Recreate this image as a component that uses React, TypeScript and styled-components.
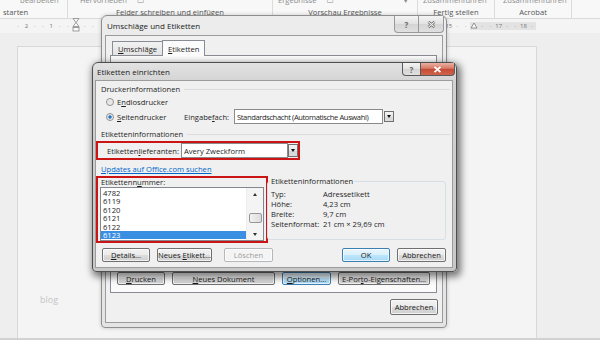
import React from "react";
import styled, { createGlobalStyle } from "styled-components";

const FONT = `"Open Sans", "Noto Sans", "DejaVu Sans", sans-serif`;

const GlobalStyle = createGlobalStyle`
  html, body { margin: 0; padding: 0; }
  body {
    width: 600px;
    height: 340px;
    overflow: hidden;
    background: #eeeeee;
    font-family: ${FONT};
    font-size: 7.6px;
    color: #1e1e1e;
  }
`;

const Screen = styled.div`
  position: relative;
  width: 600px;
  height: 340px;
  overflow: hidden;
  display: flex;
  flex-direction: column;
  background: #eeeeee;
`;

/* ---------- ribbon ---------- */

const Ribbon = styled.div`
  display: flex;
  height: 19px;
  flex: none;
  box-sizing: border-box;
  background: #f8f8f8;
  border-bottom: 1px solid #dadada;
`;

const RibbonGroup = styled.div<{ $w: number; $left?: boolean }>`
  width: ${(p) => p.$w}px;
  flex: none;
  box-sizing: border-box;
  border-right: 1px solid #dcdcdc;
  display: flex;
  flex-direction: column;
  text-align: ${(p) => (p.$left ? "left" : "center")};
`;

const CutRow = styled.div<{ $pad: number }>`
  height: 6px;
  overflow: hidden;
  display: flex;
  gap: 10px;
  padding-left: ${(p) => p.$pad}px;
  color: #8a8a8a;
  span { line-height: 12px; margin-top: -6px; white-space: nowrap; }
`;

const GroupLabel = styled.div<{ $pad?: number }>`
  height: 12px;
  line-height: 13px;
  color: #555;
  white-space: nowrap;
  padding-left: ${(p) => p.$pad ?? 0}px;
`;

/* ---------- ruler ---------- */

const Ruler = styled.div`
  display: flex;
  height: 14px;
  flex: none;
  align-items: center;
  background: #f4f4f4;
  color: #777;
  font-size: 6px;
`;

const Ticks = styled.div<{ $ml: number; $shade?: boolean; $w?: number }>`
  display: flex;
  align-items: center;
  margin-left: ${(p) => p.$ml}px;
  height: 8px;
  width: ${(p) => (p.$w ? `${p.$w}px` : "auto")};
  background: ${(p) => (p.$shade ? "#e3e3e3" : "transparent")};
`;

const Tick = styled.span`
  width: 8.3px;
  text-align: center;
  flex: none;
`;

/* ---------- document ---------- */

const Workspace = styled.div`
  flex: 1;
  display: flex;
  padding: 13px 0 0 17px;
  border-bottom: 2px solid #d2d2d2;
`;

const Page = styled.div`
  width: 520px;
  box-sizing: border-box;
  background: #f4f4f4;
  border: 1px solid #d8d8d8;
  border-bottom: none;
  padding: 246px 0 0 22px;
`;

const Faint = styled.div`
  color: #c4c4c4;
  font-size: 9px;
`;

/* ---------- windows ---------- */

const Win = styled.div<{ $x: number; $y: number; $w: number; $h: number; $front?: boolean }>`
  position: absolute;
  left: ${(p) => p.$x}px;
  top: ${(p) => p.$y}px;
  width: ${(p) => p.$w}px;
  height: ${(p) => p.$h}px;
  box-sizing: border-box;
  display: flex;
  flex-direction: column;
  padding: 0 3px ${(p) => (p.$front ? 3 : 4)}px ${(p) => (p.$front ? 2 : 3)}px;
  border: 1px solid ${(p) => (p.$front ? "#4e4e4e" : "#8e8e8e")};
  border-radius: 6px 6px 4px 4px;
  background: ${(p) =>
    p.$front
      ? "linear-gradient(180deg, #e2e2e2 0%, #d2d2d2 10%, #c8c8c8 100%)"
      : "linear-gradient(180deg, #ececec 0%, #e4e4e4 100%)"};
  box-shadow: ${(p) =>
    p.$front ? "2px 3px 7px 2px rgba(0,0,0,0.5)" : "0 0 4px rgba(0,0,0,0.2)"};
`;

const TitleBar = styled.div<{ $h: number; $pad: number }>`
  height: ${(p) => p.$h}px;
  flex: none;
  display: flex;
  align-items: flex-start;
  justify-content: space-between;
  padding-left: ${(p) => p.$pad}px;
`;

const TitleText = styled.div<{ $top: number }>`
  padding-top: ${(p) => p.$top}px;
  color: #1a1a1a;
  font-size: 8px;
`;

const CapBtns = styled.div<{ $mr?: number }>`
  display: flex;
  margin-right: ${(p) => p.$mr ?? 0}px;
`;

const CapBtn = styled.div<{ $w: number; $h: number; $close?: boolean; $active?: boolean }>`
  width: ${(p) => p.$w}px;
  height: ${(p) => p.$h}px;
  box-sizing: border-box;
  display: flex;
  align-items: center;
  justify-content: center;
  border: 1px solid ${(p) => (p.$active ? "#5a5a5a" : "#9a9a9a")};
  border-top: none;
  font-size: 8px;
  font-weight: bold;
  color: #666;
  background: ${(p) =>
    p.$close && p.$active
      ? "linear-gradient(180deg, #eab0a2 0%, #d87a66 45%, #c44a34 50%, #d0644c 100%)"
      : "linear-gradient(180deg, #f4f4f4 0%, #e2e2e2 50%, #d4d4d4 50%, #e0e0e0 100%)"};
  &:first-child { border-bottom-left-radius: 4px; }
  &:last-child { border-bottom-right-radius: 4px; border-left: none; }
`;

const Client = styled.div`
  flex: 1;
  box-sizing: border-box;
  background: #f0f0f0;
  border: 1px solid #9c9c9c;
  display: flex;
  flex-direction: column;
`;

/* ---------- back dialog ---------- */

const TabStrip = styled.div`
  display: flex;
  align-items: flex-end;
  height: 16px;
  margin-top: 3px;
  padding-left: 6px;
`;

const Tab = styled.div<{ $active?: boolean }>`
  height: ${(p) => (p.$active ? 16 : 14)}px;
  box-sizing: border-box;
  padding: 0 5px;
  display: flex;
  align-items: center;
  border: 1px solid #898c95;
  border-bottom: none;
  margin-bottom: ${(p) => (p.$active ? -1 : 0)}px;
  position: relative;
  z-index: ${(p) => (p.$active ? 1 : 0)};
  background: ${(p) => (p.$active ? "#fbfbfb" : "linear-gradient(180deg, #f2f2f2, #e3e3e3)")};
  & + & { margin-left: -1px; }
`;

const TabPanel = styled.div`
  height: 238px;
  box-sizing: border-box;
  margin: 0 5px 0 4px;
  border: 1px solid #898c95;
  background: #fbfbfb;
  display: flex;
  align-items: flex-end;
  gap: 7px;
  padding: 0 0 7px 6px;
`;

const Btn = styled.div<{ $w: number; $h?: number; $kind?: "default" | "disabled"; $ml?: number }>`
  width: ${(p) => p.$w}px;
  height: ${(p) => p.$h ?? 14}px;
  margin-left: ${(p) => p.$ml ?? 0}px;
  flex: none;
  box-sizing: border-box;
  display: flex;
  align-items: center;
  justify-content: center;
  border-radius: 2px;
  white-space: nowrap;
  border: 1px solid
    ${(p) => (p.$kind === "default" ? "#3c7fb1" : p.$kind === "disabled" ? "#b5b8bb" : "#707070")};
  color: ${(p) => (p.$kind === "disabled" ? "#9c9c9c" : "#1a1a1a")};
  background: ${(p) =>
    p.$kind === "disabled"
      ? "#f4f4f4"
      : p.$kind === "default"
      ? "linear-gradient(180deg, #eaf6fd 0%, #d9f0fc 50%, #bee6fd 50%, #a7d9f5 100%)"
      : "linear-gradient(180deg, #f2f2f2 0%, #ebebeb 50%, #dddddd 50%, #cfcfcf 100%)"};
  box-shadow: inset 0 0 0 1px rgba(255, 255, 255, 0.7);
`;

const BackFooter = styled.div`
  display: flex;
  justify-content: flex-end;
  margin: 6px 4px 0 0;
`;

/* ---------- front dialog ---------- */

const FrontBody = styled.div`
  display: flex;
  flex-direction: column;
  padding: 0 6px 0 5px;
`;

const GroupHeader = styled.div<{ $mt: number }>`
  display: flex;
  align-items: center;
  height: 10px;
  margin: ${(p) => p.$mt}px -4px 0 0;
  color: #1e1e1e;
  &::after {
    content: "";
    flex: 1;
    height: 1px;
    margin-left: 4px;
    background: #dcdcdc;
  }
`;

const RadioRow = styled.div`
  display: flex;
  align-items: center;
  height: 15px;
  padding-left: 5px;
`;

const Radio = styled.span<{ $on?: boolean }>`
  width: 8px;
  height: 8px;
  flex: none;
  box-sizing: border-box;
  border-radius: 50%;
  border: 1px solid #8e8f8f;
  background: ${(p) =>
    p.$on
      ? "radial-gradient(circle, #2a5ea8 0%, #3e8ed8 35%, #e6e6e6 45%, #f4f4f4 100%)"
      : "radial-gradient(circle, #e0e0e0 0%, #f6f6f6 100%)"};
  margin-right: 3px;
`;

const FixedLabel = styled.span<{ $w: number; $pl?: number }>`
  width: ${(p) => p.$w}px;
  padding-left: ${(p) => p.$pl ?? 0}px;
  box-sizing: border-box;
  flex: none;
  white-space: nowrap;
`;

const Combo = styled.div<{ $w: number; $h: number; $split?: boolean }>`
  width: ${(p) => p.$w}px;
  height: ${(p) => p.$h}px;
  flex: none;
  box-sizing: border-box;
  display: flex;
  align-items: center;
  gap: ${(p) => (p.$split ? 1 : 0)}px;
`;

const ComboField = styled.div<{ $h: number; $tight?: boolean }>`
  flex: 1;
  height: ${(p) => p.$h}px;
  box-sizing: border-box;
  display: flex;
  align-items: center;
  padding-left: 2px;
  background: #fff;
  border: 1px solid #8a8a8a;
  white-space: nowrap;
  overflow: hidden;
  letter-spacing: ${(p) => (p.$tight ? "-0.4px" : "0")};
`;

const DropBtn = styled.div<{ $h: number }>`
  width: 10px;
  height: ${(p) => p.$h}px;
  flex: none;
  box-sizing: border-box;
  border: 1px solid #707070;
  background: linear-gradient(180deg, #f4f4f4 0%, #e6e6e6 50%, #d6d6d6 50%, #dcdcdc 100%);
  display: flex;
  align-items: center;
  justify-content: center;
  &::after {
    content: "";
    border-left: 2.5px solid transparent;
    border-right: 2.5px solid transparent;
    border-top: 3px solid #111;
  }
`;

const RedBox = styled.div<{ $w: number; $h: number; $mt: number; $dir?: "row" | "column" }>`
  width: ${(p) => p.$w}px;
  height: ${(p) => p.$h}px;
  margin: ${(p) => p.$mt}px 0 0 -5px;
  box-sizing: border-box;
  flex: none;
  border: 2px solid #cc1414;
  display: flex;
  flex-direction: ${(p) => p.$dir ?? "row"};
  align-items: ${(p) => (p.$dir === "column" ? "stretch" : "center")};
`;

const LinkText = styled.a`
  display: block;
  height: 10px;
  line-height: 10px;
  margin-top: 4px;
  color: #0066cc;
  text-decoration: underline;
  align-self: flex-start;
`;

const LowerRow = styled.div`
  display: flex;
  align-items: flex-start;
`;

const ListLabel = styled.div`
  height: 9px;
  line-height: 8px;
  padding-left: 3px;
`;

const ListBox = styled.div`
  height: 54px;
  margin: 0 2px 0 2px;
  box-sizing: border-box;
  border: 1px solid #828790;
  background: #fff;
  display: flex;
`;

const ListItems = styled.div`
  flex: 1;
  padding-top: 1px;
`;

const ListItem = styled.div<{ $sel?: boolean }>`
  height: 8.4px;
  line-height: 8.4px;
  padding-left: 2px;
  background: ${(p) => (p.$sel ? "#3a8fe3" : "transparent")};
  color: ${(p) => (p.$sel ? "#fff" : "#1e1e1e")};
`;

const ScrollBar = styled.div`
  width: 16px;
  flex: none;
  background: #f4f4f4;
  border-left: 1px solid #ececec;
  display: flex;
  flex-direction: column;
  align-items: center;
`;

const Arrow = styled.div<{ $up?: boolean }>`
  height: 12px;
  display: flex;
  align-items: center;
  &::after {
    content: "";
    border-left: 2.5px solid transparent;
    border-right: 2.5px solid transparent;
    ${(p) => (p.$up ? "border-bottom: 3px solid #333;" : "border-top: 3px solid #333;")}
  }
`;

const Track = styled.div`
  flex: 1;
  align-self: stretch;
  display: flex;
  justify-content: center;
`;

const Thumb = styled.div`
  width: 13px;
  height: 10px;
  margin-top: 13px;
  box-sizing: border-box;
  border: 1px solid #979797;
  border-radius: 2px;
  background: linear-gradient(90deg, #f2f2f2, #dcdcdc);
`;

const InfoGroup = styled.fieldset`
  width: 179px;
  height: 64px;
  margin: 2px 0 0 -1px;
  box-sizing: border-box;
  border: 1px solid #d5dfe5;
  border-radius: 3px;
  padding: 3px 0 0 3px;
  min-width: 0;
  legend {
    padding: 0 1px;
    margin-left: -1px;
    line-height: 10px;
  }
`;

const InfoGrid = styled.div`
  display: grid;
  grid-template-columns: 52px auto;
  grid-auto-rows: 10px;
  align-items: center;
  white-space: nowrap;
`;

const ButtonRow = styled.div`
  display: flex;
  margin: 5px 0 0 1px;
  gap: 7px;
`;

const Spacer = styled.div`
  flex: 1;
`;

const Acc = ({ text, at }: { text: string; at: number }) => (
  <span>
    {text.slice(0, at)}
    <u>{text.charAt(at)}</u>
    {text.slice(at + 1)}
  </span>
);

const CloseGlyph = ({ active }: { active?: boolean }) =>
  active ? (
    <svg width="9" height="7" viewBox="0 0 9 7">
      <path d="M1.5 0.8 L7.5 6.2 M7.5 0.8 L1.5 6.2" stroke="#fff" strokeWidth="1.8" />
    </svg>
  ) : (
    <svg width="9" height="7" viewBox="0 0 9 7">
      <path d="M1.5 0.8 L7.5 6.2 M7.5 0.8 L1.5 6.2" stroke="#6a6a6a" strokeWidth="2.6" />
      <path d="M1.5 0.8 L7.5 6.2 M7.5 0.8 L1.5 6.2" stroke="#f2f2f2" strokeWidth="1.1" />
    </svg>
  );

const IndentMarker = () => (
  <svg width="8" height="14" viewBox="0 0 8 14">
    <path d="M1 0.5 H7 L4 4.5 Z M4 4.5 L1 8.5 H7 Z" fill="#fafafa" stroke="#888" strokeWidth="0.8" />
    <rect x="1" y="9.5" width="6" height="3.5" fill="#fafafa" stroke="#888" strokeWidth="0.8" />
  </svg>
);

const TabMarker = () => (
  <svg width="8" height="8" viewBox="0 0 8 8">
    <path d="M1 7 L4 2 L7 7 Z" fill="#fafafa" stroke="#777" strokeWidth="0.8" />
  </svg>
);

const ribbonGroups = [
  { w: 68, cut: ["bearbeiten"], pad: 20, label: "starten", left: true },
  { w: 205, cut: ["Hervorheben", "▭"], pad: 12, label: "Felder schreiben und einfügen" },
  { w: 145, cut: ["Ergebnisse", "▭", "", "", "", "", "", "", "▾"], pad: 5, label: "Vorschau Ergebnisse" },
  { w: 77, cut: ["Zusammenführen"], pad: 5, label: "Fertig stellen" },
  { w: 77, cut: ["Zusammenführen"], pad: 8, label: "Acrobat" },
];

const labelNumbers = ["4782", "6119", "6120", "6121", "6122", "6123"];

const labelInfo = [
  ["Typ:", "Adressetikett"],
  ["Höhe:", "4,23 cm"],
  ["Breite:", "9,7 cm"],
  ["Seitenformat:", "21 cm × 29,69 cm"],
];

export default function App() {
  return (
    <>
      <GlobalStyle />
      <Screen>
        <Ribbon>
          {ribbonGroups.map((g) => (
            <RibbonGroup key={g.label} $w={g.w} $left={g.left}>
              <CutRow $pad={g.pad}>
                {g.cut.map((c, i) => (
                  <span key={i}>{c}</span>
                ))}
              </CutRow>
              <GroupLabel $pad={g.left ? 3 : 0}>{g.label}</GroupLabel>
            </RibbonGroup>
          ))}
        </Ribbon>

        <Ruler>
          <Ticks $ml={14}>
            {["·", "2", "·", "·", "1", "·", "·"].map((t, i) => (
              <Tick key={i}>{t}</Tick>
            ))}
            <Tick>
              <IndentMarker />
            </Tick>
            <Tick>·</Tick>
            <Tick>·</Tick>
          </Ticks>
          <Spacer />
          <Ticks $ml={0}>
            {["15", "·", "·"].map((t, i) => (
              <Tick key={i}>{t}</Tick>
            ))}
          </Ticks>
          <Ticks $ml={0} $shade>
            <Tick>
              <TabMarker />
            </Tick>
            {["·", "·", "17", "·", "·", "18", "·"].map((t, i) => (
              <Tick key={i}>{t}</Tick>
            ))}
          </Ticks>
          <Ticks $ml={0} $w={64} />
        </Ruler>

        <Workspace>
          <Page>
            <Faint>blog</Faint>
          </Page>
        </Workspace>

        {/* Umschläge und Etiketten (inactive, behind) */}
        <Win $x={101} $y={15} $w={346} $h={313}>
          <TitleBar $h={19} $pad={2}>
            <TitleText $top={4}>Umschläge und Etiketten</TitleText>
            <CapBtns $mr={-1}>
              <CapBtn $w={25} $h={17}>?</CapBtn>
              <CapBtn $w={25} $h={17} $close>
                <CloseGlyph />
              </CapBtn>
            </CapBtns>
          </TitleBar>
          <Client>
            <TabStrip>
              <Tab>
                <Acc text="Umschläge" at={0} />
              </Tab>
              <Tab $active>
                <Acc text="Etiketten" at={0} />
              </Tab>
            </TabStrip>
            <TabPanel>
              <Btn $w={48} $h={13}>
                <Acc text="Drucken" at={0} />
              </Btn>
              <Btn $w={103} $h={13}>
                <Acc text="Neues Dokument" at={0} />
              </Btn>
              <Btn $w={49} $h={13} $kind="default">
                <Acc text="Optionen..." at={0} />
              </Btn>
              <Btn $w={92} $h={13}>
                <Acc text="E-Porto-Eigenschaften..." at={5} />
              </Btn>
            </TabPanel>
            <BackFooter>
              <Btn $w={48} $h={16}>Abbrechen</Btn>
            </BackFooter>
          </Client>
        </Win>

        {/* Etiketten einrichten (active, front) */}
        <Win $x={92} $y={62} $w={365} $h={210} $front>
          <TitleBar $h={17} $pad={2}>
            <TitleText $top={3}>Etiketten einrichten</TitleText>
            <CapBtns $mr={-2}>
              <CapBtn $w={19} $h={13} $active>?</CapBtn>
              <CapBtn $w={34} $h={13} $active $close>
                <CloseGlyph active />
              </CapBtn>
            </CapBtns>
          </TitleBar>
          <Client>
            <FrontBody>
              <GroupHeader $mt={3}>Druckerinformationen</GroupHeader>
              <RadioRow>
                <Radio />
                <Acc text="Endlosdrucker" at={1} />
              </RadioRow>
              <RadioRow>
                <Radio $on />
                <FixedLabel $w={67}>
                  <Acc text="Seitendrucker" at={0} />
                </FixedLabel>
                <FixedLabel $w={50}>
                  <Acc text="Eingabefach:" at={7} />
                </FixedLabel>
                <Combo $w={160} $h={15} $split>
                  <ComboField $h={15} $tight>
                    Standardschacht (Automatische Auswahl)
                  </ComboField>
                  <DropBtn $h={11} />
                </Combo>
              </RadioRow>
              <GroupHeader $mt={5}>Etiketteninformationen</GroupHeader>
              <RedBox $w={204} $h={19} $mt={2}>
                <FixedLabel $w={83} $pl={9}>
                  <Acc text="Etikettenlieferanten:" at={9} />
                </FixedLabel>
                <Combo $w={117} $h={15}>
                  <ComboField $h={15}>Avery Zweckform</ComboField>
                  <DropBtn $h={13} />
                </Combo>
              </RedBox>
              <LinkText>Updates auf Office.com suchen</LinkText>
              <LowerRow>
                <RedBox $w={172} $h={67} $mt={2} $dir="column">
                  <ListLabel>
                    <Acc text="Etikettennummer:" at={10} />
                  </ListLabel>
                  <ListBox>
                    <ListItems>
                      {labelNumbers.map((n) => (
                        <ListItem key={n} $sel={n === "6123"}>
                          {n}
                        </ListItem>
                      ))}
                    </ListItems>
                    <ScrollBar>
                      <Arrow $up />
                      <Track>
                        <Thumb />
                      </Track>
                      <Arrow />
                    </ScrollBar>
                  </ListBox>
                </RedBox>
                <InfoGroup>
                  <legend>Etiketteninformationen</legend>
                  <InfoGrid>
                    {labelInfo.map(([k, v]) => (
                      <React.Fragment key={k}>
                        <span>{k}</span>
                        <span>{v}</span>
                      </React.Fragment>
                    ))}
                  </InfoGrid>
                </InfoGroup>
              </LowerRow>
              <ButtonRow>
                <Btn $w={48}>
                  <Acc text="Details..." at={0} />
                </Btn>
                <Btn $w={55}>
                  <Acc text="Neues Etikett..." at={6} />
                </Btn>
                <Btn $w={49} $kind="disabled" $ml={5}>
                  Löschen
                </Btn>
                <Spacer />
                <Btn $w={48} $kind="default">OK</Btn>
                <Btn $w={49}>Abbrechen</Btn>
              </ButtonRow>
            </FrontBody>
          </Client>
        </Win>
      </Screen>
    </>
  );
}
